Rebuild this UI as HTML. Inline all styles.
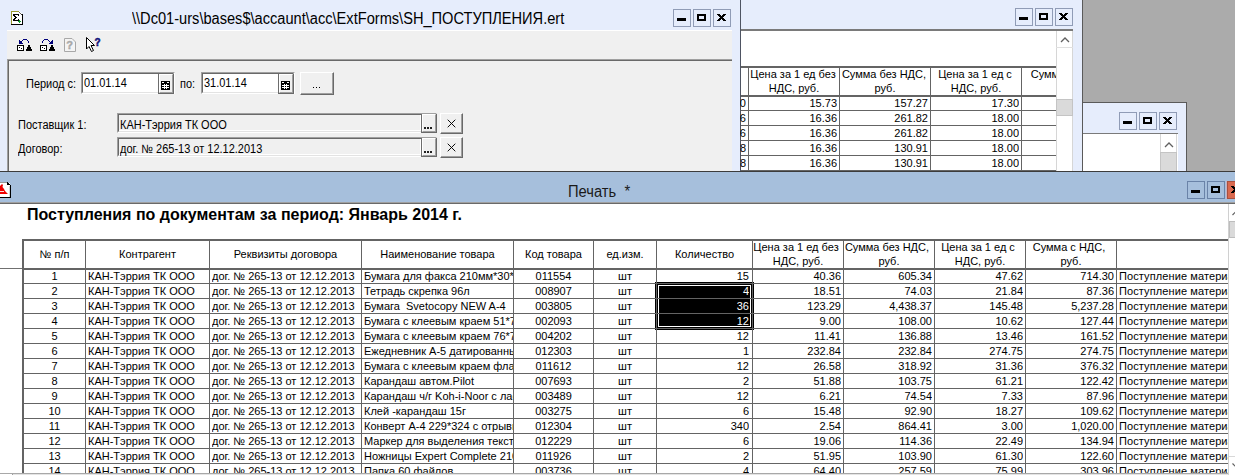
<!DOCTYPE html><html><head><meta charset="utf-8"><style>
html,body{margin:0;padding:0}
body{width:1235px;height:475px;overflow:hidden;position:relative;background:#ababab;font-family:'Liberation Sans', sans-serif}
div{box-sizing:border-box}
</style></head><body>
<div style="position:absolute;left:740px;top:0px;width:343px;height:171px;background:#e6edfc"></div>
<div style="position:absolute;left:1082px;top:0px;width:1px;height:171px;background:#5a5a5a"></div>
<div style="position:absolute;left:1015px;top:8px;width:18px;height:18px;border:1px solid #909cb6;background:#e6edfc"></div>
<div style="position:absolute;left:1035px;top:8px;width:18px;height:18px;border:1px solid #909cb6;background:#e6edfc"></div>
<div style="position:absolute;left:1055px;top:8px;width:18px;height:18px;border:1px solid #909cb6;background:#e6edfc"></div>
<div style="position:absolute;left:1019px;top:17px;width:9px;height:3px;background:#000"></div>
<div style="position:absolute;left:1039px;top:13px;width:9px;height:7px;border:2px solid #000;background:#e6edfc"></div>
<svg style="position:absolute;left:1059px;top:13px" width="9" height="7" viewBox="0 0 9 7" shape-rendering="crispEdges" fill="#000"><rect x="0" y="0" width="3" height="1"/><rect x="6" y="0" width="3" height="1"/><rect x="1" y="1" width="3" height="1"/><rect x="5" y="1" width="3" height="1"/><rect x="2" y="2" width="5" height="1"/><rect x="3" y="3" width="3" height="1"/><rect x="2" y="4" width="5" height="1"/><rect x="1" y="5" width="3" height="1"/><rect x="5" y="5" width="3" height="1"/><rect x="0" y="6" width="3" height="1"/><rect x="6" y="6" width="3" height="1"/></svg>
<div style="position:absolute;left:741px;top:29px;width:332px;height:142px;background:#fff"></div>
<div style="position:absolute;left:741px;top:29px;width:332px;height:2px;background:#7a7a7a"></div>
<div style="position:absolute;left:1056px;top:31px;width:17px;height:140px;background:#fff;border-left:1px solid #d6d6d6;border-right:1px solid #d6d6d6"></div>
<div style="position:absolute;left:1056px;top:31px;width:17px;height:17px;border-bottom:1px solid #e0e0e0"></div>
<div style="position:absolute;left:1056px;top:99px;width:17px;height:17px;background:#dadada;border:1px solid #c4c4c4"></div>
<svg style="position:absolute;left:1060px;top:36px" width="10" height="8" viewBox="0 0 10 8"><path d="M1 6 L5 2 L9 6" fill="none" stroke="#606060" stroke-width="1.3"/></svg>
<div style="position:absolute;left:1083px;top:102px;width:104px;height:69px;background:#e6edfc"></div>
<div style="position:absolute;left:1083px;top:102px;width:104px;height:1px;background:#5a5a5a"></div>
<div style="position:absolute;left:1186px;top:102px;width:1px;height:69px;background:#5a5a5a"></div>
<div style="position:absolute;left:1119px;top:112px;width:18px;height:18px;border:1px solid #909cb6;background:#e6edfc"></div>
<div style="position:absolute;left:1139px;top:112px;width:18px;height:18px;border:1px solid #909cb6;background:#e6edfc"></div>
<div style="position:absolute;left:1159px;top:112px;width:18px;height:18px;border:1px solid #909cb6;background:#e6edfc"></div>
<div style="position:absolute;left:1123px;top:121px;width:9px;height:3px;background:#000"></div>
<div style="position:absolute;left:1143px;top:117px;width:9px;height:7px;border:2px solid #000;background:#e6edfc"></div>
<svg style="position:absolute;left:1163px;top:117px" width="9" height="7" viewBox="0 0 9 7" shape-rendering="crispEdges" fill="#000"><rect x="0" y="0" width="3" height="1"/><rect x="6" y="0" width="3" height="1"/><rect x="1" y="1" width="3" height="1"/><rect x="5" y="1" width="3" height="1"/><rect x="2" y="2" width="5" height="1"/><rect x="3" y="3" width="3" height="1"/><rect x="2" y="4" width="5" height="1"/><rect x="1" y="5" width="3" height="1"/><rect x="5" y="5" width="3" height="1"/><rect x="0" y="6" width="3" height="1"/><rect x="6" y="6" width="3" height="1"/></svg>
<div style="position:absolute;left:1083px;top:133px;width:95px;height:38px;background:#fff"></div>
<div style="position:absolute;left:1083px;top:133px;width:95px;height:1px;background:#7a7a7a"></div>
<div style="position:absolute;left:1160px;top:134px;width:17px;height:37px;background:#fff;border-left:1px solid #d6d6d6;border-right:1px solid #d6d6d6"></div>
<div style="position:absolute;left:1160px;top:152px;width:17px;height:19px;background:#dadada;border:1px solid #c4c4c4;border-bottom:none"></div>
<svg style="position:absolute;left:1164px;top:141px" width="10" height="8" viewBox="0 0 10 8"><path d="M1 6 L5 2 L9 6" fill="none" stroke="#606060" stroke-width="1.3"/></svg>
<div style="position:absolute;left:0px;top:0px;width:740px;height:171px;background:#e6edfc"></div>
<div style="position:absolute;left:740px;top:0px;width:1px;height:171px;background:#4e5462"></div>
<div style="position:absolute;left:673px;top:9px;width:18px;height:18px;border:1px solid #909cb6;background:#e6edfc"></div>
<div style="position:absolute;left:693px;top:9px;width:18px;height:18px;border:1px solid #909cb6;background:#e6edfc"></div>
<div style="position:absolute;left:713px;top:9px;width:18px;height:18px;border:1px solid #909cb6;background:#e6edfc"></div>
<div style="position:absolute;left:677px;top:18px;width:9px;height:3px;background:#000"></div>
<div style="position:absolute;left:697px;top:14px;width:9px;height:7px;border:2px solid #000;background:#e6edfc"></div>
<svg style="position:absolute;left:717px;top:14px" width="9" height="7" viewBox="0 0 9 7" shape-rendering="crispEdges" fill="#000"><rect x="0" y="0" width="3" height="1"/><rect x="6" y="0" width="3" height="1"/><rect x="1" y="1" width="3" height="1"/><rect x="5" y="1" width="3" height="1"/><rect x="2" y="2" width="5" height="1"/><rect x="3" y="3" width="3" height="1"/><rect x="2" y="4" width="5" height="1"/><rect x="1" y="5" width="3" height="1"/><rect x="5" y="5" width="3" height="1"/><rect x="0" y="6" width="3" height="1"/><rect x="6" y="6" width="3" height="1"/></svg>
<div style="position:absolute;left:132px;top:10px;line-height:18px;font-size:16px;transform:scaleX(0.913);transform-origin:0 0;white-space:pre;color:#000">\\Dc01-urs\bases$\accaunt\acc\ExtForms\SH_ПОСТУПЛЕНИЯ.ert</div>
<svg style="position:absolute;left:11px;top:11px" width="13" height="15" viewBox="0 0 13 15" shape-rendering="crispEdges">
<path d="M0 0 H8 L11 3 V13 H0 Z" fill="#fff"/>
<rect x="0" y="0" width="1" height="14" fill="#9a9a30"/>
<rect x="0" y="0" width="8" height="1" fill="#9a9a30"/>
<rect x="8" y="1" width="1" height="1" fill="#606060"/><rect x="9" y="2" width="1" height="1" fill="#606060"/><rect x="10" y="3" width="1" height="1" fill="#303030"/>
<rect x="11" y="3" width="1" height="11" fill="#000"/>
<rect x="0" y="13" width="12" height="1" fill="#000"/>
<g fill="#000">
<rect x="2" y="3" width="6" height="1"/><rect x="7" y="3" width="1" height="2"/>
<rect x="2" y="4" width="2" height="1"/><rect x="3" y="5" width="2" height="1"/><rect x="4" y="6" width="2" height="1"/>
<rect x="3" y="7" width="2" height="1"/><rect x="2" y="8" width="2" height="1"/>
<rect x="2" y="9" width="6" height="1"/><rect x="7" y="8" width="1" height="1"/>
</g>
<g fill="#0a9a2a"><rect x="7" y="10" width="3" height="1"/><rect x="8" y="9" width="1" height="3"/></g>
</svg>
<div style="position:absolute;left:7px;top:30px;width:725px;height:141px;background:#f0f0f0"></div>
<div style="position:absolute;left:7px;top:30px;width:725px;height:1px;background:#fff"></div>
<svg style="position:absolute;left:0;top:0" width="110" height="60" viewBox="0 0 110 60" shape-rendering="crispEdges"><rect x="18" y="46" width="5" height="4" fill="#fff"/><rect x="41" y="46" width="5" height="4" fill="#fff"/><rect x="23" y="39" width="4" height="1" fill="#00007a"/><rect x="22" y="40" width="1" height="1" fill="#00007a"/><rect x="27" y="40" width="1" height="1" fill="#00007a"/><rect x="21" y="41" width="1" height="1" fill="#00007a"/><rect x="28" y="41" width="1" height="2" fill="#00007a"/><rect x="19" y="40" width="1" height="1" fill="#00007a"/><rect x="19" y="41" width="2" height="1" fill="#00007a"/><rect x="19" y="42" width="3" height="1" fill="#00007a"/><rect x="19" y="43" width="4" height="1" fill="#00007a"/><rect x="44" y="39" width="4" height="1" fill="#00007a"/><rect x="43" y="40" width="1" height="1" fill="#00007a"/><rect x="48" y="40" width="1" height="1" fill="#00007a"/><rect x="42" y="41" width="1" height="2" fill="#00007a"/><rect x="49" y="41" width="1" height="1" fill="#00007a"/><rect x="52" y="40" width="1" height="1" fill="#00007a"/><rect x="51" y="41" width="2" height="1" fill="#00007a"/><rect x="50" y="42" width="3" height="1" fill="#00007a"/><rect x="49" y="43" width="4" height="1" fill="#00007a"/><rect x="17" y="45" width="7" height="1" fill="#000"/><rect x="17" y="50" width="7" height="1" fill="#000"/><rect x="17" y="45" width="1" height="6" fill="#000"/><rect x="23" y="45" width="1" height="6" fill="#000"/><rect x="19" y="47" width="1" height="1" fill="#000"/><rect x="21" y="48" width="1" height="1" fill="#000"/><rect x="28" y="45" width="2" height="2" fill="#000"/><rect x="27" y="47" width="4" height="2" fill="#000"/><rect x="26" y="49" width="6" height="2" fill="#000"/><rect x="40" y="45" width="7" height="1" fill="#000"/><rect x="40" y="50" width="7" height="1" fill="#000"/><rect x="40" y="45" width="1" height="6" fill="#000"/><rect x="46" y="45" width="1" height="6" fill="#000"/><rect x="42" y="47" width="1" height="1" fill="#000"/><rect x="44" y="48" width="1" height="1" fill="#000"/><rect x="51" y="45" width="2" height="2" fill="#000"/><rect x="50" y="47" width="4" height="2" fill="#000"/><rect x="49" y="49" width="6" height="2" fill="#000"/><g transform="translate(64,38)" shape-rendering="auto">
<path d="M0.5 0.5 H8 L11.5 4 V13.5 H0.5 Z" fill="#f4f4f4" stroke="#a8a8a8" stroke-width="1"/>
<text x="2.3" y="11" font-family="Liberation Sans" font-weight="bold" font-size="11" fill="#a8a8a8" stroke="#a8a8a8" stroke-width="0.4">?</text>
</g>
<g transform="translate(86,37)" shape-rendering="auto">
<path d="M0.5 0.5 V12 L3 9.5 L5.5 14.5 L7.5 13.5 L5 8.5 H8.5 Z" fill="#fff" stroke="#000" stroke-width="1"/>
<text x="8.5" y="9" font-family="Liberation Sans" font-weight="bold" font-size="10" fill="#10107a" stroke="#10107a" stroke-width="0.5">?</text>
</g></svg>
<div style="position:absolute;left:7px;top:59px;width:725px;height:112px;border-top:1px solid #a0a0a0;border-left:1px solid #a0a0a0;background:#f0f0f0"></div>
<div style="position:absolute;left:8px;top:60px;width:724px;height:111px;border-top:1px solid #696969;border-left:1px solid #696969"></div>
<div style="position:absolute;left:26px;top:77px;line-height:14px;font-size:12px;white-space:pre;transform:scaleX(0.915);transform-origin:0 0">Период с:</div>
<div style="position:absolute;left:81px;top:72px;width:94px;height:22px;background:#fff;border-top:1px solid #a0a0a0;border-left:1px solid #a0a0a0;border-right:1px solid #fff;border-bottom:1px solid #fff"></div>
<div style="position:absolute;left:82px;top:73px;width:92px;height:20px;border-top:1px solid #696969;border-left:1px solid #696969;border-right:1px solid #e3e3e3;border-bottom:1px solid #e3e3e3"></div>
<div style="position:absolute;left:84px;top:76px;line-height:14px;font-size:12px;white-space:pre;transform:scaleX(0.915);transform-origin:0 0">01.01.14</div>
<div style="position:absolute;left:158px;top:74px;width:16px;height:20px;background:#f0f0f0;border-left:1px solid #6d6d6d;border-right:1px solid #696969;border-bottom:1px solid #696969"></div>
<div style="position:absolute;left:159px;top:74px;width:14px;height:19px;border-left:1px solid #fff;border-top:1px solid #fff;border-right:1px solid #a0a0a0;border-bottom:1px solid #a0a0a0"></div>
<svg style="position:absolute;left:161px;top:81px" width="9" height="9" viewBox="0 0 9 9" shape-rendering="crispEdges"><rect x="0" y="0" width="9" height="9" fill="#000"/><g fill="#fff"><rect x="1" y="1" width="2" height="1"/><rect x="6" y="1" width="2" height="1"/><rect x="1" y="4" width="7" height="1"/><rect x="1" y="6" width="7" height="1"/><rect x="3" y="3" width="1" height="5"/><rect x="5" y="3" width="1" height="5"/></g></svg>
<div style="position:absolute;left:180px;top:77px;line-height:14px;font-size:12px;white-space:pre;transform:scaleX(0.915);transform-origin:0 0">по:</div>
<div style="position:absolute;left:201px;top:72px;width:94px;height:22px;background:#fff;border-top:1px solid #a0a0a0;border-left:1px solid #a0a0a0;border-right:1px solid #fff;border-bottom:1px solid #fff"></div>
<div style="position:absolute;left:202px;top:73px;width:92px;height:20px;border-top:1px solid #696969;border-left:1px solid #696969;border-right:1px solid #e3e3e3;border-bottom:1px solid #e3e3e3"></div>
<div style="position:absolute;left:204px;top:76px;line-height:14px;font-size:12px;white-space:pre;transform:scaleX(0.915);transform-origin:0 0">31.01.14</div>
<div style="position:absolute;left:278px;top:74px;width:16px;height:20px;background:#f0f0f0;border-left:1px solid #6d6d6d;border-right:1px solid #696969;border-bottom:1px solid #696969"></div>
<div style="position:absolute;left:279px;top:74px;width:14px;height:19px;border-left:1px solid #fff;border-top:1px solid #fff;border-right:1px solid #a0a0a0;border-bottom:1px solid #a0a0a0"></div>
<svg style="position:absolute;left:281px;top:81px" width="9" height="9" viewBox="0 0 9 9" shape-rendering="crispEdges"><rect x="0" y="0" width="9" height="9" fill="#000"/><g fill="#fff"><rect x="1" y="1" width="2" height="1"/><rect x="6" y="1" width="2" height="1"/><rect x="1" y="4" width="7" height="1"/><rect x="1" y="6" width="7" height="1"/><rect x="3" y="3" width="1" height="5"/><rect x="5" y="3" width="1" height="5"/></g></svg>
<div style="position:absolute;left:300px;top:72px;width:34px;height:23px;background:#f0f0f0;border-top:1px solid #fff;border-left:1px solid #fff;border-right:1px solid #696969;border-bottom:1px solid #696969"></div>
<div style="position:absolute;left:301px;top:73px;width:32px;height:21px;border-right:1px solid #a0a0a0;border-bottom:1px solid #a0a0a0"></div>
<div style="position:absolute;left:313px;top:87px;width:1px;height:1px;background:#000"></div>
<div style="position:absolute;left:316px;top:87px;width:1px;height:1px;background:#000"></div>
<div style="position:absolute;left:319px;top:87px;width:1px;height:1px;background:#000"></div>
<div style="position:absolute;left:18px;top:118px;line-height:14px;font-size:12px;white-space:pre;transform:scaleX(0.915);transform-origin:0 0">Поставщик 1:</div>
<div style="position:absolute;left:117px;top:113px;width:320px;height:20px;background:#f0f0f0;border-top:1px solid #a0a0a0;border-left:1px solid #a0a0a0;border-right:1px solid #fff;border-bottom:1px solid #fff"></div>
<div style="position:absolute;left:118px;top:114px;width:318px;height:18px;border-top:1px solid #696969;border-left:1px solid #696969;border-right:1px solid #e3e3e3;border-bottom:1px solid #e3e3e3"></div>
<div style="position:absolute;left:119px;top:115px;width:302px;height:16px;border-right:1px solid #fff;border-bottom:1px solid #fff"></div>
<div style="position:absolute;left:120px;top:118px;line-height:14px;font-size:12px;white-space:pre;transform:scaleX(0.915);transform-origin:0 0">КАН-Тэррия ТК ООО</div>
<div style="position:absolute;left:421px;top:114px;width:16px;height:19px;background:#f0f0f0;border-left:1px solid #6d6d6d;border-right:1px solid #696969;border-bottom:1px solid #696969"></div>
<div style="position:absolute;left:422px;top:114px;width:14px;height:18px;border-left:1px solid #fff;border-top:1px solid #fff;border-right:1px solid #a0a0a0;border-bottom:1px solid #a0a0a0"></div>
<div style="position:absolute;left:424px;top:127px;width:2px;height:2px;background:#202020"></div>
<div style="position:absolute;left:427px;top:127px;width:2px;height:2px;background:#202020"></div>
<div style="position:absolute;left:430px;top:127px;width:2px;height:2px;background:#202020"></div>
<div style="position:absolute;left:440px;top:113px;width:23px;height:21px;background:#f0f0f0;border-top:1px solid #fff;border-left:1px solid #fff;border-right:1px solid #696969;border-bottom:1px solid #696969"></div>
<div style="position:absolute;left:441px;top:114px;width:21px;height:19px;border-right:1px solid #a0a0a0;border-bottom:1px solid #a0a0a0"></div>
<svg style="position:absolute;left:447px;top:119px" width="9" height="9" viewBox="0 0 9 9"><path d="M0.7 0.7 L8.3 8.3 M8.3 0.7 L0.7 8.3" stroke="#000" stroke-width="0.95"/></svg>
<div style="position:absolute;left:18px;top:142px;line-height:14px;font-size:12px;white-space:pre;transform:scaleX(0.915);transform-origin:0 0">Договор:</div>
<div style="position:absolute;left:117px;top:137px;width:320px;height:20px;background:#f0f0f0;border-top:1px solid #a0a0a0;border-left:1px solid #a0a0a0;border-right:1px solid #fff;border-bottom:1px solid #fff"></div>
<div style="position:absolute;left:118px;top:138px;width:318px;height:18px;border-top:1px solid #696969;border-left:1px solid #696969;border-right:1px solid #e3e3e3;border-bottom:1px solid #e3e3e3"></div>
<div style="position:absolute;left:119px;top:139px;width:302px;height:16px;border-right:1px solid #fff;border-bottom:1px solid #fff"></div>
<div style="position:absolute;left:120px;top:142px;line-height:14px;font-size:12px;white-space:pre;transform:scaleX(0.915);transform-origin:0 0">дог. № 265-13 от 12.12.2013</div>
<div style="position:absolute;left:421px;top:138px;width:16px;height:19px;background:#f0f0f0;border-left:1px solid #6d6d6d;border-right:1px solid #696969;border-bottom:1px solid #696969"></div>
<div style="position:absolute;left:422px;top:138px;width:14px;height:18px;border-left:1px solid #fff;border-top:1px solid #fff;border-right:1px solid #a0a0a0;border-bottom:1px solid #a0a0a0"></div>
<div style="position:absolute;left:424px;top:151px;width:2px;height:2px;background:#202020"></div>
<div style="position:absolute;left:427px;top:151px;width:2px;height:2px;background:#202020"></div>
<div style="position:absolute;left:430px;top:151px;width:2px;height:2px;background:#202020"></div>
<div style="position:absolute;left:440px;top:137px;width:23px;height:21px;background:#f0f0f0;border-top:1px solid #fff;border-left:1px solid #fff;border-right:1px solid #696969;border-bottom:1px solid #696969"></div>
<div style="position:absolute;left:441px;top:138px;width:21px;height:19px;border-right:1px solid #a0a0a0;border-bottom:1px solid #a0a0a0"></div>
<svg style="position:absolute;left:447px;top:143px" width="9" height="9" viewBox="0 0 9 9"><path d="M0.7 0.7 L8.3 8.3 M8.3 0.7 L0.7 8.3" stroke="#000" stroke-width="0.95"/></svg>
<div style="position:absolute;left:0px;top:171px;width:1235px;height:304px;background:#fff"></div>
<div style="position:absolute;left:0px;top:171px;width:1235px;height:1px;background:#3c3c3c"></div>
<div style="position:absolute;left:0px;top:172px;width:1235px;height:31px;background:#a6bfdc"></div>
<div style="position:absolute;left:0px;top:202px;width:1235px;height:1px;background:#a0a0a0"></div>
<div style="position:absolute;left:0px;top:203px;width:1235px;height:1px;background:#696969"></div>
<div style="position:absolute;left:568px;top:183px;line-height:18px;font-size:16px;transform:scaleX(0.92);transform-origin:0 0;white-space:pre;color:#1a1a1a">Печать  *</div>
<svg style="position:absolute;left:0px;top:182px" width="12" height="16" viewBox="0 0 12 16" shape-rendering="crispEdges">
<rect x="0" y="1" width="10" height="14" fill="#fff"/>
<rect x="0" y="0" width="7" height="1" fill="#9a9a9a"/>
<rect x="7" y="0" width="1" height="1" fill="#000"/><rect x="8" y="1" width="1" height="1" fill="#000"/><rect x="9" y="2" width="1" height="1" fill="#000"/><rect x="7" y="1" width="1" height="2" fill="#000"/><rect x="8" y="2" width="1" height="1" fill="#fff"/>
<rect x="7" y="2" width="3" height="1" fill="#000"/>
<rect x="10" y="3" width="1" height="13" fill="#000"/>
<rect x="0" y="15" width="11" height="1" fill="#000"/>
<rect x="9" y="4" width="1" height="11" fill="#d8d8d8"/>
<path d="M0 4 L2 2 L3 3 L2.5 5 L4 7 L5 9 L8 12 L0 12 Z" fill="#f00000" shape-rendering="auto"/>
<rect x="0" y="9" width="4" height="1" fill="#f8d8d8"/>
</svg>
<div style="position:absolute;left:1187px;top:181px;width:18px;height:18px;border:1px solid #6a83a8;background:#a6bfdc"></div>
<div style="position:absolute;left:1207px;top:181px;width:18px;height:18px;border:1px solid #6a83a8;background:#a6bfdc"></div>
<div style="position:absolute;left:1191px;top:190px;width:9px;height:3px;background:#000"></div>
<div style="position:absolute;left:1211px;top:186px;width:9px;height:7px;border:2px solid #000;background:#a6bfdc"></div>
<div style="position:absolute;left:1226px;top:181px;width:1px;height:18px;background:#c9b0c0"></div>
<div style="position:absolute;left:1227px;top:181px;width:20px;height:18px;background:#d9694f;border:1px solid #a8503e"></div>
<svg style="position:absolute;left:1231px;top:186px" width="9" height="7" viewBox="0 0 9 7" shape-rendering="crispEdges" fill="#000"><rect x="0" y="0" width="3" height="1"/><rect x="6" y="0" width="3" height="1"/><rect x="1" y="1" width="3" height="1"/><rect x="5" y="1" width="3" height="1"/><rect x="2" y="2" width="5" height="1"/><rect x="3" y="3" width="3" height="1"/><rect x="2" y="4" width="5" height="1"/><rect x="1" y="5" width="3" height="1"/><rect x="5" y="5" width="3" height="1"/><rect x="0" y="6" width="3" height="1"/><rect x="6" y="6" width="3" height="1"/></svg>
<div style="position:absolute;left:27px;top:206px;line-height:18px;font-size:16px;font-weight:bold;white-space:pre;color:#000">Поступления по документам за период: Январь 2014 г.</div>
<div style="position:absolute;left:1228px;top:204px;width:7px;height:271px;background:#fff;border-left:1px solid #d0d0d0"></div>
<div style="position:absolute;left:1229px;top:221px;width:8px;height:17px;background:#dadada;border:1px solid #bdbdbd"></div>
<div style="position:absolute;left:1229px;top:456px;width:6px;height:19px;background:#fff;border-top:1px solid #d8d8d8"></div>
<svg style="position:absolute;left:1232px;top:211px" width="6" height="6" viewBox="0 0 6 6"><path d="M0.5 4 L3 1.5 L5.5 4" fill="none" stroke="#606060" stroke-width="1.2"/></svg>
<svg style="position:absolute;left:1232px;top:462px" width="6" height="6" viewBox="0 0 6 6"><path d="M0.5 1.5 L3 4 L5.5 1.5" fill="none" stroke="#606060" stroke-width="1.2"/></svg>
<div style="position:absolute;left:22px;top:239px;width:1206px;height:2px;background:#646464"></div>
<div style="position:absolute;left:22px;top:239px;width:2px;height:236px;background:#646464"></div>
<div style="position:absolute;left:0px;top:268px;width:22px;height:1px;background:#707070"></div>
<div style="position:absolute;left:22px;top:268px;width:1206px;height:2px;background:#646464"></div>
<div style="position:absolute;left:85px;top:241px;width:1px;height:234px;background:#646464"></div>
<div style="position:absolute;left:209px;top:241px;width:1px;height:234px;background:#646464"></div>
<div style="position:absolute;left:361px;top:241px;width:1px;height:234px;background:#646464"></div>
<div style="position:absolute;left:513px;top:241px;width:1px;height:234px;background:#646464"></div>
<div style="position:absolute;left:593px;top:241px;width:1px;height:234px;background:#646464"></div>
<div style="position:absolute;left:656px;top:241px;width:1px;height:234px;background:#646464"></div>
<div style="position:absolute;left:752px;top:241px;width:1px;height:234px;background:#646464"></div>
<div style="position:absolute;left:843px;top:241px;width:1px;height:234px;background:#646464"></div>
<div style="position:absolute;left:934px;top:241px;width:1px;height:234px;background:#646464"></div>
<div style="position:absolute;left:1025px;top:241px;width:1px;height:234px;background:#646464"></div>
<div style="position:absolute;left:1116px;top:241px;width:1px;height:234px;background:#646464"></div>
<div style="position:absolute;left:24px;top:283px;width:1204px;height:1px;background:#646464"></div>
<div style="position:absolute;left:24px;top:298px;width:1204px;height:1px;background:#646464"></div>
<div style="position:absolute;left:24px;top:313px;width:1204px;height:1px;background:#646464"></div>
<div style="position:absolute;left:24px;top:328px;width:1204px;height:1px;background:#646464"></div>
<div style="position:absolute;left:24px;top:343px;width:1204px;height:1px;background:#646464"></div>
<div style="position:absolute;left:24px;top:358px;width:1204px;height:1px;background:#646464"></div>
<div style="position:absolute;left:24px;top:373px;width:1204px;height:1px;background:#646464"></div>
<div style="position:absolute;left:24px;top:388px;width:1204px;height:1px;background:#646464"></div>
<div style="position:absolute;left:24px;top:403px;width:1204px;height:1px;background:#646464"></div>
<div style="position:absolute;left:24px;top:418px;width:1204px;height:1px;background:#646464"></div>
<div style="position:absolute;left:24px;top:433px;width:1204px;height:1px;background:#646464"></div>
<div style="position:absolute;left:24px;top:448px;width:1204px;height:1px;background:#646464"></div>
<div style="position:absolute;left:24px;top:463px;width:1204px;height:1px;background:#646464"></div>
<div style="position:absolute;top:248px;line-height:13px;font-size:11px;white-space:pre;color:#000;left:24px;width:61px;text-align:center;">№ п/п</div>
<div style="position:absolute;top:248px;line-height:13px;font-size:11px;white-space:pre;color:#000;left:86px;width:123px;text-align:center;">Контрагент</div>
<div style="position:absolute;top:248px;line-height:13px;font-size:11px;white-space:pre;color:#000;left:210px;width:151px;text-align:center;">Реквизиты договора</div>
<div style="position:absolute;top:248px;line-height:13px;font-size:11px;white-space:pre;color:#000;left:362px;width:151px;text-align:center;">Наименование товара</div>
<div style="position:absolute;top:248px;line-height:13px;font-size:11px;white-space:pre;color:#000;left:514px;width:79px;text-align:center;">Код товара</div>
<div style="position:absolute;top:248px;line-height:13px;font-size:11px;white-space:pre;color:#000;left:594px;width:62px;text-align:center;">ед.изм.</div>
<div style="position:absolute;top:248px;line-height:13px;font-size:11px;white-space:pre;color:#000;left:657px;width:95px;text-align:center;">Количество</div>
<div style="position:absolute;top:241px;line-height:13px;font-size:11px;white-space:pre;color:#000;left:751px;width:90px;text-align:center;">Цена за 1 ед без</div>
<div style="position:absolute;top:255px;line-height:13px;font-size:11px;white-space:pre;color:#000;left:753px;width:90px;text-align:center;">НДС, руб.</div>
<div style="position:absolute;top:241px;line-height:13px;font-size:11px;white-space:pre;color:#000;left:842px;width:90px;text-align:center;">Сумма без НДС,</div>
<div style="position:absolute;top:255px;line-height:13px;font-size:11px;white-space:pre;color:#000;left:844px;width:90px;text-align:center;">руб.</div>
<div style="position:absolute;top:241px;line-height:13px;font-size:11px;white-space:pre;color:#000;left:933px;width:90px;text-align:center;">Цена за 1 ед с</div>
<div style="position:absolute;top:255px;line-height:13px;font-size:11px;white-space:pre;color:#000;left:935px;width:90px;text-align:center;">НДС, руб.</div>
<div style="position:absolute;top:241px;line-height:13px;font-size:11px;white-space:pre;color:#000;left:1024px;width:90px;text-align:center;">Сумма с НДС,</div>
<div style="position:absolute;top:255px;line-height:13px;font-size:11px;white-space:pre;color:#000;left:1026px;width:90px;text-align:center;">руб.</div>
<div style="position:absolute;top:270px;line-height:13px;font-size:11px;white-space:pre;color:#000;left:24px;width:61px;text-align:center;">1</div>
<div style="position:absolute;top:270px;line-height:13px;font-size:11px;white-space:pre;color:#000;left:88px;width:121px;overflow:hidden;">КАН-Тэррия ТК ООО</div>
<div style="position:absolute;top:270px;line-height:13px;font-size:11px;white-space:pre;color:#000;left:212px;width:149px;overflow:hidden;">дог. № 265-13 от 12.12.2013</div>
<div style="position:absolute;top:270px;line-height:13px;font-size:11px;white-space:pre;color:#000;left:364px;width:149px;overflow:hidden;">Бумага для факса 210мм*30*</div>
<div style="position:absolute;top:270px;line-height:13px;font-size:11px;white-space:pre;color:#000;left:514px;width:79px;text-align:center;">011554</div>
<div style="position:absolute;top:270px;line-height:13px;font-size:11px;white-space:pre;color:#000;left:594px;width:62px;text-align:center;">шт</div>
<div style="position:absolute;top:270px;line-height:13px;font-size:11px;white-space:pre;color:#000;left:659px;width:90px;text-align:right;overflow:hidden;z-index:3;">15</div>
<div style="position:absolute;top:270px;line-height:13px;font-size:11px;white-space:pre;color:#000;left:753px;width:88px;text-align:right;overflow:hidden;">40.36</div>
<div style="position:absolute;top:270px;line-height:13px;font-size:11px;white-space:pre;color:#000;left:844px;width:88px;text-align:right;overflow:hidden;">605.34</div>
<div style="position:absolute;top:270px;line-height:13px;font-size:11px;white-space:pre;color:#000;left:935px;width:88px;text-align:right;overflow:hidden;">47.62</div>
<div style="position:absolute;top:270px;line-height:13px;font-size:11px;white-space:pre;color:#000;left:1026px;width:88px;text-align:right;overflow:hidden;">714.30</div>
<div style="position:absolute;top:270px;line-height:13px;font-size:11px;white-space:pre;color:#000;left:1119px;width:109px;overflow:hidden;letter-spacing:0.1px;">Поступление материалов</div>
<div style="position:absolute;top:285px;line-height:13px;font-size:11px;white-space:pre;color:#000;left:24px;width:61px;text-align:center;">2</div>
<div style="position:absolute;top:285px;line-height:13px;font-size:11px;white-space:pre;color:#000;left:88px;width:121px;overflow:hidden;">КАН-Тэррия ТК ООО</div>
<div style="position:absolute;top:285px;line-height:13px;font-size:11px;white-space:pre;color:#000;left:212px;width:149px;overflow:hidden;">дог. № 265-13 от 12.12.2013</div>
<div style="position:absolute;top:285px;line-height:13px;font-size:11px;white-space:pre;color:#000;left:364px;width:149px;overflow:hidden;">Тетрадь скрепка 96л</div>
<div style="position:absolute;top:285px;line-height:13px;font-size:11px;white-space:pre;color:#000;left:514px;width:79px;text-align:center;">008907</div>
<div style="position:absolute;top:285px;line-height:13px;font-size:11px;white-space:pre;color:#000;left:594px;width:62px;text-align:center;">шт</div>
<div style="position:absolute;top:285px;line-height:13px;font-size:11px;white-space:pre;color:#fff;left:659px;width:90px;text-align:right;overflow:hidden;z-index:3;">4</div>
<div style="position:absolute;top:285px;line-height:13px;font-size:11px;white-space:pre;color:#000;left:753px;width:88px;text-align:right;overflow:hidden;">18.51</div>
<div style="position:absolute;top:285px;line-height:13px;font-size:11px;white-space:pre;color:#000;left:844px;width:88px;text-align:right;overflow:hidden;">74.03</div>
<div style="position:absolute;top:285px;line-height:13px;font-size:11px;white-space:pre;color:#000;left:935px;width:88px;text-align:right;overflow:hidden;">21.84</div>
<div style="position:absolute;top:285px;line-height:13px;font-size:11px;white-space:pre;color:#000;left:1026px;width:88px;text-align:right;overflow:hidden;">87.36</div>
<div style="position:absolute;top:285px;line-height:13px;font-size:11px;white-space:pre;color:#000;left:1119px;width:109px;overflow:hidden;letter-spacing:0.1px;">Поступление материалов</div>
<div style="position:absolute;top:300px;line-height:13px;font-size:11px;white-space:pre;color:#000;left:24px;width:61px;text-align:center;">3</div>
<div style="position:absolute;top:300px;line-height:13px;font-size:11px;white-space:pre;color:#000;left:88px;width:121px;overflow:hidden;">КАН-Тэррия ТК ООО</div>
<div style="position:absolute;top:300px;line-height:13px;font-size:11px;white-space:pre;color:#000;left:212px;width:149px;overflow:hidden;">дог. № 265-13 от 12.12.2013</div>
<div style="position:absolute;top:300px;line-height:13px;font-size:11px;white-space:pre;color:#000;left:364px;width:149px;overflow:hidden;">Бумага  Svetocopy NEW A-4</div>
<div style="position:absolute;top:300px;line-height:13px;font-size:11px;white-space:pre;color:#000;left:514px;width:79px;text-align:center;">003805</div>
<div style="position:absolute;top:300px;line-height:13px;font-size:11px;white-space:pre;color:#000;left:594px;width:62px;text-align:center;">шт</div>
<div style="position:absolute;top:300px;line-height:13px;font-size:11px;white-space:pre;color:#fff;left:659px;width:90px;text-align:right;overflow:hidden;z-index:3;">36</div>
<div style="position:absolute;top:300px;line-height:13px;font-size:11px;white-space:pre;color:#000;left:753px;width:88px;text-align:right;overflow:hidden;">123.29</div>
<div style="position:absolute;top:300px;line-height:13px;font-size:11px;white-space:pre;color:#000;left:844px;width:88px;text-align:right;overflow:hidden;">4,438.37</div>
<div style="position:absolute;top:300px;line-height:13px;font-size:11px;white-space:pre;color:#000;left:935px;width:88px;text-align:right;overflow:hidden;">145.48</div>
<div style="position:absolute;top:300px;line-height:13px;font-size:11px;white-space:pre;color:#000;left:1026px;width:88px;text-align:right;overflow:hidden;">5,237.28</div>
<div style="position:absolute;top:300px;line-height:13px;font-size:11px;white-space:pre;color:#000;left:1119px;width:109px;overflow:hidden;letter-spacing:0.1px;">Поступление материалов</div>
<div style="position:absolute;top:315px;line-height:13px;font-size:11px;white-space:pre;color:#000;left:24px;width:61px;text-align:center;">4</div>
<div style="position:absolute;top:315px;line-height:13px;font-size:11px;white-space:pre;color:#000;left:88px;width:121px;overflow:hidden;">КАН-Тэррия ТК ООО</div>
<div style="position:absolute;top:315px;line-height:13px;font-size:11px;white-space:pre;color:#000;left:212px;width:149px;overflow:hidden;">дог. № 265-13 от 12.12.2013</div>
<div style="position:absolute;top:315px;line-height:13px;font-size:11px;white-space:pre;color:#000;left:364px;width:149px;overflow:hidden;">Бумага с клеевым краем 51*76</div>
<div style="position:absolute;top:315px;line-height:13px;font-size:11px;white-space:pre;color:#000;left:514px;width:79px;text-align:center;">002093</div>
<div style="position:absolute;top:315px;line-height:13px;font-size:11px;white-space:pre;color:#000;left:594px;width:62px;text-align:center;">шт</div>
<div style="position:absolute;top:315px;line-height:13px;font-size:11px;white-space:pre;color:#fff;left:659px;width:90px;text-align:right;overflow:hidden;z-index:3;">12</div>
<div style="position:absolute;top:315px;line-height:13px;font-size:11px;white-space:pre;color:#000;left:753px;width:88px;text-align:right;overflow:hidden;">9.00</div>
<div style="position:absolute;top:315px;line-height:13px;font-size:11px;white-space:pre;color:#000;left:844px;width:88px;text-align:right;overflow:hidden;">108.00</div>
<div style="position:absolute;top:315px;line-height:13px;font-size:11px;white-space:pre;color:#000;left:935px;width:88px;text-align:right;overflow:hidden;">10.62</div>
<div style="position:absolute;top:315px;line-height:13px;font-size:11px;white-space:pre;color:#000;left:1026px;width:88px;text-align:right;overflow:hidden;">127.44</div>
<div style="position:absolute;top:315px;line-height:13px;font-size:11px;white-space:pre;color:#000;left:1119px;width:109px;overflow:hidden;letter-spacing:0.1px;">Поступление материалов</div>
<div style="position:absolute;top:330px;line-height:13px;font-size:11px;white-space:pre;color:#000;left:24px;width:61px;text-align:center;">5</div>
<div style="position:absolute;top:330px;line-height:13px;font-size:11px;white-space:pre;color:#000;left:88px;width:121px;overflow:hidden;">КАН-Тэррия ТК ООО</div>
<div style="position:absolute;top:330px;line-height:13px;font-size:11px;white-space:pre;color:#000;left:212px;width:149px;overflow:hidden;">дог. № 265-13 от 12.12.2013</div>
<div style="position:absolute;top:330px;line-height:13px;font-size:11px;white-space:pre;color:#000;left:364px;width:149px;overflow:hidden;">Бумага с клеевым краем 76*76</div>
<div style="position:absolute;top:330px;line-height:13px;font-size:11px;white-space:pre;color:#000;left:514px;width:79px;text-align:center;">004202</div>
<div style="position:absolute;top:330px;line-height:13px;font-size:11px;white-space:pre;color:#000;left:594px;width:62px;text-align:center;">шт</div>
<div style="position:absolute;top:330px;line-height:13px;font-size:11px;white-space:pre;color:#000;left:659px;width:90px;text-align:right;overflow:hidden;z-index:3;">12</div>
<div style="position:absolute;top:330px;line-height:13px;font-size:11px;white-space:pre;color:#000;left:753px;width:88px;text-align:right;overflow:hidden;">11.41</div>
<div style="position:absolute;top:330px;line-height:13px;font-size:11px;white-space:pre;color:#000;left:844px;width:88px;text-align:right;overflow:hidden;">136.88</div>
<div style="position:absolute;top:330px;line-height:13px;font-size:11px;white-space:pre;color:#000;left:935px;width:88px;text-align:right;overflow:hidden;">13.46</div>
<div style="position:absolute;top:330px;line-height:13px;font-size:11px;white-space:pre;color:#000;left:1026px;width:88px;text-align:right;overflow:hidden;">161.52</div>
<div style="position:absolute;top:330px;line-height:13px;font-size:11px;white-space:pre;color:#000;left:1119px;width:109px;overflow:hidden;letter-spacing:0.1px;">Поступление материалов</div>
<div style="position:absolute;top:345px;line-height:13px;font-size:11px;white-space:pre;color:#000;left:24px;width:61px;text-align:center;">6</div>
<div style="position:absolute;top:345px;line-height:13px;font-size:11px;white-space:pre;color:#000;left:88px;width:121px;overflow:hidden;">КАН-Тэррия ТК ООО</div>
<div style="position:absolute;top:345px;line-height:13px;font-size:11px;white-space:pre;color:#000;left:212px;width:149px;overflow:hidden;">дог. № 265-13 от 12.12.2013</div>
<div style="position:absolute;top:345px;line-height:13px;font-size:11px;white-space:pre;color:#000;left:364px;width:149px;overflow:hidden;">Ежедневник А-5 датированный</div>
<div style="position:absolute;top:345px;line-height:13px;font-size:11px;white-space:pre;color:#000;left:514px;width:79px;text-align:center;">012303</div>
<div style="position:absolute;top:345px;line-height:13px;font-size:11px;white-space:pre;color:#000;left:594px;width:62px;text-align:center;">шт</div>
<div style="position:absolute;top:345px;line-height:13px;font-size:11px;white-space:pre;color:#000;left:659px;width:90px;text-align:right;overflow:hidden;z-index:3;">1</div>
<div style="position:absolute;top:345px;line-height:13px;font-size:11px;white-space:pre;color:#000;left:753px;width:88px;text-align:right;overflow:hidden;">232.84</div>
<div style="position:absolute;top:345px;line-height:13px;font-size:11px;white-space:pre;color:#000;left:844px;width:88px;text-align:right;overflow:hidden;">232.84</div>
<div style="position:absolute;top:345px;line-height:13px;font-size:11px;white-space:pre;color:#000;left:935px;width:88px;text-align:right;overflow:hidden;">274.75</div>
<div style="position:absolute;top:345px;line-height:13px;font-size:11px;white-space:pre;color:#000;left:1026px;width:88px;text-align:right;overflow:hidden;">274.75</div>
<div style="position:absolute;top:345px;line-height:13px;font-size:11px;white-space:pre;color:#000;left:1119px;width:109px;overflow:hidden;letter-spacing:0.1px;">Поступление материалов</div>
<div style="position:absolute;top:360px;line-height:13px;font-size:11px;white-space:pre;color:#000;left:24px;width:61px;text-align:center;">7</div>
<div style="position:absolute;top:360px;line-height:13px;font-size:11px;white-space:pre;color:#000;left:88px;width:121px;overflow:hidden;">КАН-Тэррия ТК ООО</div>
<div style="position:absolute;top:360px;line-height:13px;font-size:11px;white-space:pre;color:#000;left:212px;width:149px;overflow:hidden;">дог. № 265-13 от 12.12.2013</div>
<div style="position:absolute;top:360px;line-height:13px;font-size:11px;white-space:pre;color:#000;left:364px;width:149px;overflow:hidden;">Бумага с клеевым краем флажки</div>
<div style="position:absolute;top:360px;line-height:13px;font-size:11px;white-space:pre;color:#000;left:514px;width:79px;text-align:center;">011612</div>
<div style="position:absolute;top:360px;line-height:13px;font-size:11px;white-space:pre;color:#000;left:594px;width:62px;text-align:center;">шт</div>
<div style="position:absolute;top:360px;line-height:13px;font-size:11px;white-space:pre;color:#000;left:659px;width:90px;text-align:right;overflow:hidden;z-index:3;">12</div>
<div style="position:absolute;top:360px;line-height:13px;font-size:11px;white-space:pre;color:#000;left:753px;width:88px;text-align:right;overflow:hidden;">26.58</div>
<div style="position:absolute;top:360px;line-height:13px;font-size:11px;white-space:pre;color:#000;left:844px;width:88px;text-align:right;overflow:hidden;">318.92</div>
<div style="position:absolute;top:360px;line-height:13px;font-size:11px;white-space:pre;color:#000;left:935px;width:88px;text-align:right;overflow:hidden;">31.36</div>
<div style="position:absolute;top:360px;line-height:13px;font-size:11px;white-space:pre;color:#000;left:1026px;width:88px;text-align:right;overflow:hidden;">376.32</div>
<div style="position:absolute;top:360px;line-height:13px;font-size:11px;white-space:pre;color:#000;left:1119px;width:109px;overflow:hidden;letter-spacing:0.1px;">Поступление материалов</div>
<div style="position:absolute;top:375px;line-height:13px;font-size:11px;white-space:pre;color:#000;left:24px;width:61px;text-align:center;">8</div>
<div style="position:absolute;top:375px;line-height:13px;font-size:11px;white-space:pre;color:#000;left:88px;width:121px;overflow:hidden;">КАН-Тэррия ТК ООО</div>
<div style="position:absolute;top:375px;line-height:13px;font-size:11px;white-space:pre;color:#000;left:212px;width:149px;overflow:hidden;">дог. № 265-13 от 12.12.2013</div>
<div style="position:absolute;top:375px;line-height:13px;font-size:11px;white-space:pre;color:#000;left:364px;width:149px;overflow:hidden;">Карандаш автом.Pilot</div>
<div style="position:absolute;top:375px;line-height:13px;font-size:11px;white-space:pre;color:#000;left:514px;width:79px;text-align:center;">007693</div>
<div style="position:absolute;top:375px;line-height:13px;font-size:11px;white-space:pre;color:#000;left:594px;width:62px;text-align:center;">шт</div>
<div style="position:absolute;top:375px;line-height:13px;font-size:11px;white-space:pre;color:#000;left:659px;width:90px;text-align:right;overflow:hidden;z-index:3;">2</div>
<div style="position:absolute;top:375px;line-height:13px;font-size:11px;white-space:pre;color:#000;left:753px;width:88px;text-align:right;overflow:hidden;">51.88</div>
<div style="position:absolute;top:375px;line-height:13px;font-size:11px;white-space:pre;color:#000;left:844px;width:88px;text-align:right;overflow:hidden;">103.75</div>
<div style="position:absolute;top:375px;line-height:13px;font-size:11px;white-space:pre;color:#000;left:935px;width:88px;text-align:right;overflow:hidden;">61.21</div>
<div style="position:absolute;top:375px;line-height:13px;font-size:11px;white-space:pre;color:#000;left:1026px;width:88px;text-align:right;overflow:hidden;">122.42</div>
<div style="position:absolute;top:375px;line-height:13px;font-size:11px;white-space:pre;color:#000;left:1119px;width:109px;overflow:hidden;letter-spacing:0.1px;">Поступление материалов</div>
<div style="position:absolute;top:390px;line-height:13px;font-size:11px;white-space:pre;color:#000;left:24px;width:61px;text-align:center;">9</div>
<div style="position:absolute;top:390px;line-height:13px;font-size:11px;white-space:pre;color:#000;left:88px;width:121px;overflow:hidden;">КАН-Тэррия ТК ООО</div>
<div style="position:absolute;top:390px;line-height:13px;font-size:11px;white-space:pre;color:#000;left:212px;width:149px;overflow:hidden;">дог. № 265-13 от 12.12.2013</div>
<div style="position:absolute;top:390px;line-height:13px;font-size:11px;white-space:pre;color:#000;left:364px;width:149px;overflow:hidden;">Карандаш ч/г Koh-i-Noor с ластиком</div>
<div style="position:absolute;top:390px;line-height:13px;font-size:11px;white-space:pre;color:#000;left:514px;width:79px;text-align:center;">003489</div>
<div style="position:absolute;top:390px;line-height:13px;font-size:11px;white-space:pre;color:#000;left:594px;width:62px;text-align:center;">шт</div>
<div style="position:absolute;top:390px;line-height:13px;font-size:11px;white-space:pre;color:#000;left:659px;width:90px;text-align:right;overflow:hidden;z-index:3;">12</div>
<div style="position:absolute;top:390px;line-height:13px;font-size:11px;white-space:pre;color:#000;left:753px;width:88px;text-align:right;overflow:hidden;">6.21</div>
<div style="position:absolute;top:390px;line-height:13px;font-size:11px;white-space:pre;color:#000;left:844px;width:88px;text-align:right;overflow:hidden;">74.54</div>
<div style="position:absolute;top:390px;line-height:13px;font-size:11px;white-space:pre;color:#000;left:935px;width:88px;text-align:right;overflow:hidden;">7.33</div>
<div style="position:absolute;top:390px;line-height:13px;font-size:11px;white-space:pre;color:#000;left:1026px;width:88px;text-align:right;overflow:hidden;">87.96</div>
<div style="position:absolute;top:390px;line-height:13px;font-size:11px;white-space:pre;color:#000;left:1119px;width:109px;overflow:hidden;letter-spacing:0.1px;">Поступление материалов</div>
<div style="position:absolute;top:405px;line-height:13px;font-size:11px;white-space:pre;color:#000;left:24px;width:61px;text-align:center;">10</div>
<div style="position:absolute;top:405px;line-height:13px;font-size:11px;white-space:pre;color:#000;left:88px;width:121px;overflow:hidden;">КАН-Тэррия ТК ООО</div>
<div style="position:absolute;top:405px;line-height:13px;font-size:11px;white-space:pre;color:#000;left:212px;width:149px;overflow:hidden;">дог. № 265-13 от 12.12.2013</div>
<div style="position:absolute;top:405px;line-height:13px;font-size:11px;white-space:pre;color:#000;left:364px;width:149px;overflow:hidden;">Клей -карандаш 15г</div>
<div style="position:absolute;top:405px;line-height:13px;font-size:11px;white-space:pre;color:#000;left:514px;width:79px;text-align:center;">003275</div>
<div style="position:absolute;top:405px;line-height:13px;font-size:11px;white-space:pre;color:#000;left:594px;width:62px;text-align:center;">шт</div>
<div style="position:absolute;top:405px;line-height:13px;font-size:11px;white-space:pre;color:#000;left:659px;width:90px;text-align:right;overflow:hidden;z-index:3;">6</div>
<div style="position:absolute;top:405px;line-height:13px;font-size:11px;white-space:pre;color:#000;left:753px;width:88px;text-align:right;overflow:hidden;">15.48</div>
<div style="position:absolute;top:405px;line-height:13px;font-size:11px;white-space:pre;color:#000;left:844px;width:88px;text-align:right;overflow:hidden;">92.90</div>
<div style="position:absolute;top:405px;line-height:13px;font-size:11px;white-space:pre;color:#000;left:935px;width:88px;text-align:right;overflow:hidden;">18.27</div>
<div style="position:absolute;top:405px;line-height:13px;font-size:11px;white-space:pre;color:#000;left:1026px;width:88px;text-align:right;overflow:hidden;">109.62</div>
<div style="position:absolute;top:405px;line-height:13px;font-size:11px;white-space:pre;color:#000;left:1119px;width:109px;overflow:hidden;letter-spacing:0.1px;">Поступление материалов</div>
<div style="position:absolute;top:420px;line-height:13px;font-size:11px;white-space:pre;color:#000;left:24px;width:61px;text-align:center;">11</div>
<div style="position:absolute;top:420px;line-height:13px;font-size:11px;white-space:pre;color:#000;left:88px;width:121px;overflow:hidden;">КАН-Тэррия ТК ООО</div>
<div style="position:absolute;top:420px;line-height:13px;font-size:11px;white-space:pre;color:#000;left:212px;width:149px;overflow:hidden;">дог. № 265-13 от 12.12.2013</div>
<div style="position:absolute;top:420px;line-height:13px;font-size:11px;white-space:pre;color:#000;left:364px;width:149px;overflow:hidden;">Конверт А-4 229*324 с отрывной</div>
<div style="position:absolute;top:420px;line-height:13px;font-size:11px;white-space:pre;color:#000;left:514px;width:79px;text-align:center;">012304</div>
<div style="position:absolute;top:420px;line-height:13px;font-size:11px;white-space:pre;color:#000;left:594px;width:62px;text-align:center;">шт</div>
<div style="position:absolute;top:420px;line-height:13px;font-size:11px;white-space:pre;color:#000;left:659px;width:90px;text-align:right;overflow:hidden;z-index:3;">340</div>
<div style="position:absolute;top:420px;line-height:13px;font-size:11px;white-space:pre;color:#000;left:753px;width:88px;text-align:right;overflow:hidden;">2.54</div>
<div style="position:absolute;top:420px;line-height:13px;font-size:11px;white-space:pre;color:#000;left:844px;width:88px;text-align:right;overflow:hidden;">864.41</div>
<div style="position:absolute;top:420px;line-height:13px;font-size:11px;white-space:pre;color:#000;left:935px;width:88px;text-align:right;overflow:hidden;">3.00</div>
<div style="position:absolute;top:420px;line-height:13px;font-size:11px;white-space:pre;color:#000;left:1026px;width:88px;text-align:right;overflow:hidden;">1,020.00</div>
<div style="position:absolute;top:420px;line-height:13px;font-size:11px;white-space:pre;color:#000;left:1119px;width:109px;overflow:hidden;letter-spacing:0.1px;">Поступление материалов</div>
<div style="position:absolute;top:435px;line-height:13px;font-size:11px;white-space:pre;color:#000;left:24px;width:61px;text-align:center;">12</div>
<div style="position:absolute;top:435px;line-height:13px;font-size:11px;white-space:pre;color:#000;left:88px;width:121px;overflow:hidden;">КАН-Тэррия ТК ООО</div>
<div style="position:absolute;top:435px;line-height:13px;font-size:11px;white-space:pre;color:#000;left:212px;width:149px;overflow:hidden;">дог. № 265-13 от 12.12.2013</div>
<div style="position:absolute;top:435px;line-height:13px;font-size:11px;white-space:pre;color:#000;left:364px;width:149px;overflow:hidden;">Маркер для выделения текста</div>
<div style="position:absolute;top:435px;line-height:13px;font-size:11px;white-space:pre;color:#000;left:514px;width:79px;text-align:center;">012229</div>
<div style="position:absolute;top:435px;line-height:13px;font-size:11px;white-space:pre;color:#000;left:594px;width:62px;text-align:center;">шт</div>
<div style="position:absolute;top:435px;line-height:13px;font-size:11px;white-space:pre;color:#000;left:659px;width:90px;text-align:right;overflow:hidden;z-index:3;">6</div>
<div style="position:absolute;top:435px;line-height:13px;font-size:11px;white-space:pre;color:#000;left:753px;width:88px;text-align:right;overflow:hidden;">19.06</div>
<div style="position:absolute;top:435px;line-height:13px;font-size:11px;white-space:pre;color:#000;left:844px;width:88px;text-align:right;overflow:hidden;">114.36</div>
<div style="position:absolute;top:435px;line-height:13px;font-size:11px;white-space:pre;color:#000;left:935px;width:88px;text-align:right;overflow:hidden;">22.49</div>
<div style="position:absolute;top:435px;line-height:13px;font-size:11px;white-space:pre;color:#000;left:1026px;width:88px;text-align:right;overflow:hidden;">134.94</div>
<div style="position:absolute;top:435px;line-height:13px;font-size:11px;white-space:pre;color:#000;left:1119px;width:109px;overflow:hidden;letter-spacing:0.1px;">Поступление материалов</div>
<div style="position:absolute;top:450px;line-height:13px;font-size:11px;white-space:pre;color:#000;left:24px;width:61px;text-align:center;">13</div>
<div style="position:absolute;top:450px;line-height:13px;font-size:11px;white-space:pre;color:#000;left:88px;width:121px;overflow:hidden;">КАН-Тэррия ТК ООО</div>
<div style="position:absolute;top:450px;line-height:13px;font-size:11px;white-space:pre;color:#000;left:212px;width:149px;overflow:hidden;">дог. № 265-13 от 12.12.2013</div>
<div style="position:absolute;top:450px;line-height:13px;font-size:11px;white-space:pre;color:#000;left:364px;width:149px;overflow:hidden;">Ножницы Expert Complete 210мм</div>
<div style="position:absolute;top:450px;line-height:13px;font-size:11px;white-space:pre;color:#000;left:514px;width:79px;text-align:center;">011926</div>
<div style="position:absolute;top:450px;line-height:13px;font-size:11px;white-space:pre;color:#000;left:594px;width:62px;text-align:center;">шт</div>
<div style="position:absolute;top:450px;line-height:13px;font-size:11px;white-space:pre;color:#000;left:659px;width:90px;text-align:right;overflow:hidden;z-index:3;">2</div>
<div style="position:absolute;top:450px;line-height:13px;font-size:11px;white-space:pre;color:#000;left:753px;width:88px;text-align:right;overflow:hidden;">51.95</div>
<div style="position:absolute;top:450px;line-height:13px;font-size:11px;white-space:pre;color:#000;left:844px;width:88px;text-align:right;overflow:hidden;">103.90</div>
<div style="position:absolute;top:450px;line-height:13px;font-size:11px;white-space:pre;color:#000;left:935px;width:88px;text-align:right;overflow:hidden;">61.30</div>
<div style="position:absolute;top:450px;line-height:13px;font-size:11px;white-space:pre;color:#000;left:1026px;width:88px;text-align:right;overflow:hidden;">122.60</div>
<div style="position:absolute;top:450px;line-height:13px;font-size:11px;white-space:pre;color:#000;left:1119px;width:109px;overflow:hidden;letter-spacing:0.1px;">Поступление материалов</div>
<div style="position:absolute;top:465px;line-height:13px;font-size:11px;white-space:pre;color:#000;left:24px;width:61px;text-align:center;">14</div>
<div style="position:absolute;top:465px;line-height:13px;font-size:11px;white-space:pre;color:#000;left:88px;width:121px;overflow:hidden;">КАН-Тэррия ТК ООО</div>
<div style="position:absolute;top:465px;line-height:13px;font-size:11px;white-space:pre;color:#000;left:212px;width:149px;overflow:hidden;">дог. № 265-13 от 12.12.2013</div>
<div style="position:absolute;top:465px;line-height:13px;font-size:11px;white-space:pre;color:#000;left:364px;width:149px;overflow:hidden;">Папка 60 файлов</div>
<div style="position:absolute;top:465px;line-height:13px;font-size:11px;white-space:pre;color:#000;left:514px;width:79px;text-align:center;">003736</div>
<div style="position:absolute;top:465px;line-height:13px;font-size:11px;white-space:pre;color:#000;left:594px;width:62px;text-align:center;">шт</div>
<div style="position:absolute;top:465px;line-height:13px;font-size:11px;white-space:pre;color:#000;left:659px;width:90px;text-align:right;overflow:hidden;z-index:3;">4</div>
<div style="position:absolute;top:465px;line-height:13px;font-size:11px;white-space:pre;color:#000;left:753px;width:88px;text-align:right;overflow:hidden;">64.40</div>
<div style="position:absolute;top:465px;line-height:13px;font-size:11px;white-space:pre;color:#000;left:844px;width:88px;text-align:right;overflow:hidden;">257.59</div>
<div style="position:absolute;top:465px;line-height:13px;font-size:11px;white-space:pre;color:#000;left:935px;width:88px;text-align:right;overflow:hidden;">75.99</div>
<div style="position:absolute;top:465px;line-height:13px;font-size:11px;white-space:pre;color:#000;left:1026px;width:88px;text-align:right;overflow:hidden;">303.96</div>
<div style="position:absolute;top:465px;line-height:13px;font-size:11px;white-space:pre;color:#000;left:1119px;width:109px;overflow:hidden;letter-spacing:0.1px;">Поступление материалов</div>
<div style="position:absolute;left:655px;top:282px;width:99px;height:48px;background:#000;z-index:1"></div>
<div style="position:absolute;left:658px;top:285px;width:93px;height:42px;background:#000;border:1px solid #fff;z-index:1"></div>
<div style="position:absolute;left:656px;top:282px;width:1px;height:48px;background:#646464;z-index:2"></div>
<div style="position:absolute;left:752px;top:282px;width:1px;height:48px;background:#646464;z-index:2"></div>
<div style="position:absolute;left:655px;top:283px;width:99px;height:1px;background:#646464;z-index:2"></div>
<div style="position:absolute;left:655px;top:298px;width:99px;height:1px;background:#646464;z-index:2"></div>
<div style="position:absolute;left:655px;top:313px;width:99px;height:1px;background:#646464;z-index:2"></div>
<div style="position:absolute;left:655px;top:328px;width:99px;height:1px;background:#646464;z-index:2"></div>
<div style="position:absolute;left:741px;top:66px;width:315px;height:2px;background:#646464"></div>
<div style="position:absolute;left:741px;top:95px;width:315px;height:2px;background:#646464"></div>
<div style="position:absolute;left:748px;top:68px;width:1px;height:103px;background:#646464"></div>
<div style="position:absolute;left:839px;top:68px;width:1px;height:103px;background:#646464"></div>
<div style="position:absolute;left:930px;top:68px;width:1px;height:103px;background:#646464"></div>
<div style="position:absolute;left:1021px;top:68px;width:1px;height:103px;background:#646464"></div>
<div style="position:absolute;left:741px;top:110px;width:315px;height:1px;background:#646464"></div>
<div style="position:absolute;left:741px;top:125px;width:315px;height:1px;background:#646464"></div>
<div style="position:absolute;left:741px;top:140px;width:315px;height:1px;background:#646464"></div>
<div style="position:absolute;left:741px;top:155px;width:315px;height:1px;background:#646464"></div>
<div style="position:absolute;left:741px;top:170px;width:315px;height:1px;background:#646464"></div>
<div style="position:absolute;top:68px;line-height:13px;font-size:11px;white-space:pre;color:#000;left:748px;width:90px;text-align:center;">Цена за 1 ед без</div>
<div style="position:absolute;top:82px;line-height:13px;font-size:11px;white-space:pre;color:#000;left:749px;width:90px;text-align:center;">НДС, руб.</div>
<div style="position:absolute;top:68px;line-height:13px;font-size:11px;white-space:pre;color:#000;left:839px;width:90px;text-align:center;">Сумма без НДС,</div>
<div style="position:absolute;top:82px;line-height:13px;font-size:11px;white-space:pre;color:#000;left:840px;width:90px;text-align:center;">руб.</div>
<div style="position:absolute;top:68px;line-height:13px;font-size:11px;white-space:pre;color:#000;left:930px;width:90px;text-align:center;">Цена за 1 ед с</div>
<div style="position:absolute;top:82px;line-height:13px;font-size:11px;white-space:pre;color:#000;left:931px;width:90px;text-align:center;">НДС, руб.</div>
<div style="position:absolute;top:68px;line-height:13px;font-size:11px;white-space:pre;color:#000;left:1022px;width:90px;text-align:center;clip-path:inset(0 56px 0 0);">Сумма с НДС,</div>
<div style="position:absolute;left:740px;top:97px;width:6px;height:13px;overflow:hidden"><div style="position:absolute;right:0;top:0;line-height:13px;font-size:11px;white-space:pre">10</div></div>
<div style="position:absolute;top:97px;line-height:13px;font-size:11px;white-space:pre;color:#000;left:749px;width:88px;text-align:right;overflow:hidden;">15.73</div>
<div style="position:absolute;top:97px;line-height:13px;font-size:11px;white-space:pre;color:#000;left:840px;width:88px;text-align:right;overflow:hidden;">157.27</div>
<div style="position:absolute;top:97px;line-height:13px;font-size:11px;white-space:pre;color:#000;left:931px;width:88px;text-align:right;overflow:hidden;">17.30</div>
<div style="position:absolute;left:740px;top:112px;width:6px;height:13px;overflow:hidden"><div style="position:absolute;right:0;top:0;line-height:13px;font-size:11px;white-space:pre">16</div></div>
<div style="position:absolute;top:112px;line-height:13px;font-size:11px;white-space:pre;color:#000;left:749px;width:88px;text-align:right;overflow:hidden;">16.36</div>
<div style="position:absolute;top:112px;line-height:13px;font-size:11px;white-space:pre;color:#000;left:840px;width:88px;text-align:right;overflow:hidden;">261.82</div>
<div style="position:absolute;top:112px;line-height:13px;font-size:11px;white-space:pre;color:#000;left:931px;width:88px;text-align:right;overflow:hidden;">18.00</div>
<div style="position:absolute;left:740px;top:127px;width:6px;height:13px;overflow:hidden"><div style="position:absolute;right:0;top:0;line-height:13px;font-size:11px;white-space:pre">16</div></div>
<div style="position:absolute;top:127px;line-height:13px;font-size:11px;white-space:pre;color:#000;left:749px;width:88px;text-align:right;overflow:hidden;">16.36</div>
<div style="position:absolute;top:127px;line-height:13px;font-size:11px;white-space:pre;color:#000;left:840px;width:88px;text-align:right;overflow:hidden;">261.82</div>
<div style="position:absolute;top:127px;line-height:13px;font-size:11px;white-space:pre;color:#000;left:931px;width:88px;text-align:right;overflow:hidden;">18.00</div>
<div style="position:absolute;left:740px;top:142px;width:6px;height:13px;overflow:hidden"><div style="position:absolute;right:0;top:0;line-height:13px;font-size:11px;white-space:pre">8</div></div>
<div style="position:absolute;top:142px;line-height:13px;font-size:11px;white-space:pre;color:#000;left:749px;width:88px;text-align:right;overflow:hidden;">16.36</div>
<div style="position:absolute;top:142px;line-height:13px;font-size:11px;white-space:pre;color:#000;left:840px;width:88px;text-align:right;overflow:hidden;">130.91</div>
<div style="position:absolute;top:142px;line-height:13px;font-size:11px;white-space:pre;color:#000;left:931px;width:88px;text-align:right;overflow:hidden;">18.00</div>
<div style="position:absolute;left:740px;top:157px;width:6px;height:13px;overflow:hidden"><div style="position:absolute;right:0;top:0;line-height:13px;font-size:11px;white-space:pre">8</div></div>
<div style="position:absolute;top:157px;line-height:13px;font-size:11px;white-space:pre;color:#000;left:749px;width:88px;text-align:right;overflow:hidden;">16.36</div>
<div style="position:absolute;top:157px;line-height:13px;font-size:11px;white-space:pre;color:#000;left:840px;width:88px;text-align:right;overflow:hidden;">130.91</div>
<div style="position:absolute;top:157px;line-height:13px;font-size:11px;white-space:pre;color:#000;left:931px;width:88px;text-align:right;overflow:hidden;">18.00</div>
<div style="position:absolute;left:0px;top:473px;width:1228px;height:1px;background:#a8a8a8;z-index:5"></div>
<div style="position:absolute;left:0px;top:474px;width:1228px;height:1px;background:#fff;z-index:5"></div>
<div style="position:absolute;left:12px;top:474px;width:1216px;height:1px;background:#e4e4e4;border-left:1px solid #a0a0a0;z-index:5"></div>
</body></html>
